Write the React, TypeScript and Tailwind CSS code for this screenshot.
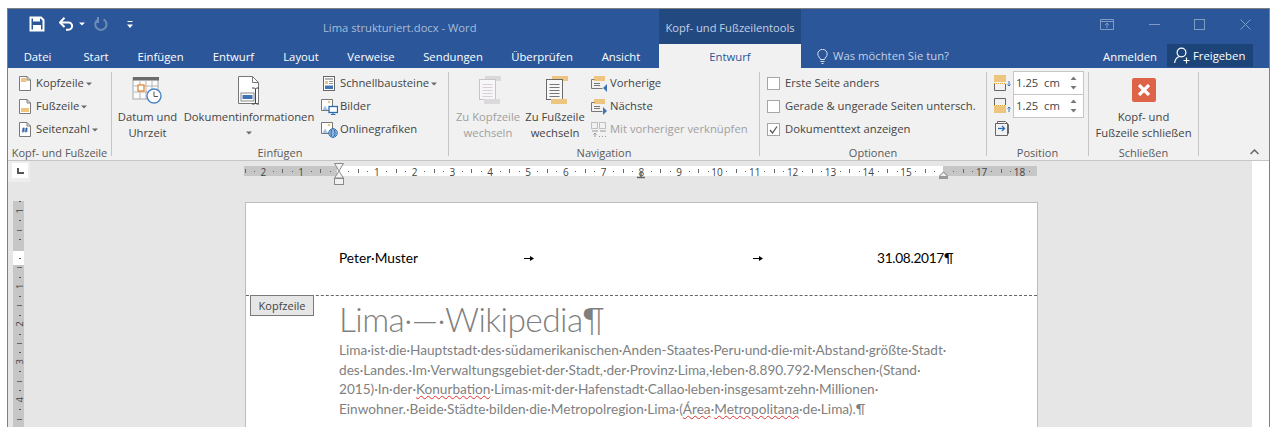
import type { ReactNode } from "react"

const uiFont = "font-['Open_Sans',sans-serif]"
const docFont = "font-['Lato',sans-serif]"

const tabs = [
  { label: "Datei", cls: "w-[59px]" },
  { label: "Start", cls: "w-[58px]" },
  { label: "Einfügen", cls: "w-[71px]" },
  { label: "Entwurf", cls: "w-[75px]" },
  { label: "Layout", cls: "w-[60px]" },
  { label: "Verweise", cls: "w-[80px]" },
  { label: "Sendungen", cls: "w-[84px]" },
  { label: "Überprüfen", cls: "w-[94px]" },
  { label: "Ansicht", cls: "w-[64px]" },
]

function Caret({ className = "fill-[#6a6a6a]" }: { className?: string }) {
  return (
    <svg width="6" height="4" viewBox="0 0 6 4" className={`inline-block shrink-0 ${className}`}>
      <path d="M0 0.5h6L3 3.5z" />
    </svg>
  )
}

function QuickAccess() {
  return (
    <div className="flex items-center h-full">
      <svg width="16" height="16" viewBox="0 0 16 16" className="ml-[21px] mb-[6px]">
        <path d="M1.5 1.5h10.5l2.5 2.5v10.5h-13z" fill="none" stroke="#fff" strokeWidth="2" />
        <rect x="4" y="1" width="7" height="4.5" fill="#fff" />
        <rect x="4" y="9" width="8" height="5" fill="#fff" />
      </svg>
      <svg width="15" height="14" viewBox="0 0 15 14" className="ml-[14px] mb-[6px]">
        <path d="M1 5.5h8.5a3.6 3.6 0 0 1 0 7.2H7" fill="none" stroke="#fff" strokeWidth="2" />
        <path d="M5.5 0.8L1 5.5l4.5 4.5" fill="none" stroke="#fff" strokeWidth="2" />
      </svg>
      <Caret className="fill-white ml-[5px] mb-[6px]" />
      <svg width="14" height="14" viewBox="0 0 14 14" className="ml-[9px] mb-[6px]">
        <path d="M4.2 2.4a5.6 5.6 0 1 0 5.4 0" fill="none" stroke="#6f8cb8" strokeWidth="2" />
        <path d="M4 0v5h-3" fill="none" stroke="#6f8cb8" strokeWidth="2" />
      </svg>
      <svg width="6" height="8" viewBox="0 0 6 8" className="ml-[19px] mb-[4px]">
        <path d="M0.5 0.5h5" stroke="#fff" />
        <path d="M0 3.5h6L3 7z" fill="#fff" />
      </svg>
    </div>
  )
}

function WindowControls() {
  return (
    <div className="flex items-center ml-auto mb-[5px] mr-[18px] gap-[35px]">
      <svg width="14" height="11" viewBox="0 0 14 11" fill="none" stroke="#7f9cc6">
        <path d="M0.5 0.5h13v10h-13zM0.5 2.5h13M7 9V4.5M5 6l2-2 2 2" />
      </svg>
      <svg width="11" height="1" viewBox="0 0 11 1" className="-mr-[1px]">
        <rect width="11" height="1" fill="#7f9cc6" />
      </svg>
      <svg width="11" height="11" viewBox="0 0 11 11" fill="none" stroke="#7f9cc6">
        <rect x="0.5" y="0.5" width="10" height="10" />
      </svg>
      <svg width="11" height="11" viewBox="0 0 11 11" fill="none" stroke="#7f9cc6">
        <path d="M0.5 0.5l10 10M10.5 0.5l-10 10" />
      </svg>
    </div>
  )
}

function TitleBar() {
  return (
    <div className="flex h-[35px] bg-[#2b579a]">
      <div className="w-[315px] shrink-0">
        <QuickAccess />
      </div>
      <div className="w-[336px] shrink-0 pt-[11px] text-[11.2px] leading-[16px] text-[#a9bcd8] whitespace-nowrap">
        Lima strukturiert.docx - Word
      </div>
      <div className="w-[142px] shrink-0 bg-[#234a80] pt-[11px] text-center text-[11.15px] leading-[16px] text-[#c3d0e4] whitespace-nowrap">
        Kopf- und Fußzeilentools
      </div>
      <WindowControls />
    </div>
  )
}

function TabBar() {
  return (
    <div className="flex h-[24px] bg-[#2b579a] text-[11.3px] leading-[26px] text-white">
      <div className="flex w-[651px] shrink-0">
        {tabs.map((t) => (
          <div key={t.label} className={`${t.cls} shrink-0 text-center whitespace-nowrap`}>
            {t.label}
          </div>
        ))}
      </div>
      <div className="w-[142px] shrink-0 bg-[#f1f1f1] text-center text-[#2b579a]">Entwurf</div>
      <div className="flex items-center pl-[16px] text-[#c3d0e4] whitespace-nowrap">
        <svg width="11" height="15" viewBox="0 0 11 15" fill="none" stroke="#d5dfee" className="mr-[5px]">
          <path d="M3.5 10.5C3 8.5 0.8 7.5 0.8 5a4.7 4.7 0 0 1 9.4 0c0 2.5-2.2 3.500-2.7 5.5zM3.5 12.5h4M4.5 14.5h2" />
        </svg>
        Was möchten Sie tun?
      </div>
      <div className="ml-auto flex mr-[16px]">
        <div className="mr-[10px] whitespace-nowrap">Anmelden</div>
        <div className="flex items-center w-[86px] h-[23px] bg-[#1d4478] pl-[7px] whitespace-nowrap">
          <svg width="16" height="17" viewBox="0 0 16 17" fill="none" stroke="#fff" strokeWidth="1.2" className="mr-[3px]">
            <circle cx="7.5" cy="5.5" r="4.4" />
            <path d="M0.6 16c0.5-3.800 2.500-6 5-6.500M9.500 13.500h6M12.500 10.500v6" />
          </svg>
          Freigeben
        </div>
      </div>
    </div>
  )
}

function Group({ label, className, children }: { label: string; className: string; children: ReactNode }) {
  return (
    <div className={`flex flex-col shrink-0 h-[84px] mt-[4px] border-r border-[#c6c6c6] ${className}`}>
      <div className="flex h-[72px]">{children}</div>
      <div className="h-[12px] text-center text-[11px] leading-[17px] text-[#5a5a5a] whitespace-nowrap">{label}</div>
    </div>
  )
}

function SmallRow({ icon, iconCls, children, dim }: { icon: ReactNode; iconCls: string; children: ReactNode; dim?: boolean }) {
  return (
    <div className={`flex items-center h-[23px] whitespace-nowrap ${dim ? "text-[#a0a0a0]" : "text-[#444]"}`}>
      <div className={`flex items-center shrink-0 ${iconCls}`}>{icon}</div>
      {children}
    </div>
  )
}

function LargeButton({ icon, className, children, dim }: { icon: ReactNode; className: string; children: ReactNode; dim?: boolean }) {
  return (
    <div className={`flex flex-col items-center shrink-0 ${className} ${dim ? "text-[#a0a0a0]" : "text-[#444]"}`}>
      <div className="flex items-start justify-center h-[37px] pt-[4px]">{icon}</div>
      <div className="text-center leading-[16px] whitespace-nowrap">{children}</div>
    </div>
  )
}

function PageIcon({ band }: { band: "top" | "bottom" | "num" }) {
  return (
    <svg width="12" height="15" viewBox="0 0 12 15">
      <path d="M0.5 0.5h7.5l3.5 3.5v10.5h-11z" fill="#fff" stroke="#7a7a7a" />
      <path d="M8 0.5v3.5h3.5" fill="none" stroke="#7a7a7a" />
      {band === "top" && <rect x="2" y="2" width="5.5" height="4" fill="#edc57f" />}
      {band === "bottom" && <rect x="2" y="9" width="8" height="4" fill="#edc57f" />}
      {band === "num" && <path d="M4.8 5.5l-1 5M7.8 5.5l-1 5M3 7h5.8M2.8 9h5.8" stroke="#2b579a" fill="none" />}
    </svg>
  )
}

function CalendarIcon() {
  return (
    <svg width="31" height="28" viewBox="0 0 31 28">
      <rect x="1" y="2" width="25" height="21" fill="#fbfbfb" stroke="#a9a9a9" />
      <rect x="1" y="1" width="26" height="3.5" fill="#6b6b6b" />
      <path d="M1.5 10h25M1.5 16h25M8 4v19M14 4v19M20 4v19" stroke="#b5b5b5" />
      <rect x="6" y="9" width="6" height="6" fill="#fff" stroke="#e2883a" strokeWidth="1.3" />
      <circle cx="22" cy="20" r="7" fill="#fff" stroke="#4b84c4" strokeWidth="1.4" />
      <path d="M22 15.5V20.5H26" fill="none" stroke="#555" />
    </svg>
  )
}

function DocInfoIcon() {
  return (
    <svg width="23" height="29" viewBox="0 0 23 29" className="ml-[1px]">
      <path d="M0.5 0.5h14l6 6v21h-20z" fill="#fff" stroke="#777" />
      <path d="M14.5 0.5v6h6" fill="none" stroke="#777" />
      <rect x="3" y="17" width="13" height="8" fill="#fff" stroke="#8a8a8a" />
      <rect x="4.5" y="19" width="10" height="4" fill="#3f74b4" />
      <path d="M14 12h2.5l1 1 1-1H21M17.5 13v14M14 28h2.5l1-1 1 1H21" fill="none" stroke="#444" />
    </svg>
  )
}

function QuickPartsIcon() {
  return (
    <svg width="12" height="15" viewBox="0 0 12 15">
      <rect x="0.5" y="0.5" width="11" height="14" fill="#fff" stroke="#666" />
      <rect x="2" y="2" width="8" height="2" fill="#b6b6b6" />
      <rect x="2" y="5" width="3" height="3" fill="#edc57f" />
      <path d="M6 5.5h4M6 7.5h4" stroke="#999" />
      <rect x="2" y="9.5" width="8" height="3.5" fill="#3f74b4" />
    </svg>
  )
}

function PictureIcon({ badge }: { badge: "screen" | "globe" }) {
  return (
    <svg width="17" height="17" viewBox="0 0 17 17">
      <path d="M0.5 1.5h11v11h-11z" fill="#fff" stroke="#777" />
      <circle cx="8" cy="4" r="1.3" fill="#edc57f" />
      <path d="M1.5 12L4 7.5l3 4.500z" fill="#a8c4e2" />
      {badge === "screen" && (
        <g>
          <rect x="8" y="8.500" width="8.500" height="6" fill="#fff" stroke="#2b6cb0" strokeWidth="1.300" />
          <path d="M12 14.500v1.500M10 16.500h4.500" stroke="#2b6cb0" />
        </g>
      )}
      {badge === "globe" && (
        <g fill="none" stroke="#2b6cb0">
          <circle cx="12" cy="12" r="4.300" fill="#fff" />
          <path d="M8 12h8M8.500 10h7M8.500 14h7" />
          <ellipse cx="12" cy="12" rx="2" ry="4.300" />
        </g>
      )}
    </svg>
  )
}

function StackIcon({ dim }: { dim?: boolean }) {
  const line = dim ? "#d8cfd8" : "#777"
  const frame = dim ? "#c8c4c8" : "#6a6a6a"
  const band = dim ? "#dcd9dc" : "#edc57f"
  return (
    <svg width="22" height="28" viewBox="0 0 22 28" className="ml-[3px]">
      <rect x="6" y="0" width="16" height="5" fill={band} />
      <rect x="0.500" y="3.500" width="16" height="20" fill="#f7f7f7" stroke={frame} />
      <path d="M3.500 8.500h10M3.500 11.500h10M3.500 14.500h10M3.500 17.500h10M3.500 20.500h10" stroke={line} />
      <rect x="5" y="23" width="16" height="5" fill={band} />
    </svg>
  )
}

function NavIcon({ dir }: { dir: "prev" | "next" }) {
  return (
    <svg width="16" height="16" viewBox="0 0 16 16">
      <rect x="3" y="0" width="11" height="5" fill="#edc57f" />
      <path d="M0.500 3.500v9h11" fill="none" stroke="#777" />
      <path d="M0.500 3.500h3M3 7.500h6M3 9.500h6" stroke="#777" fill="none" />
      {dir === "prev" ? <path d="M16 8v8l-4-4z" fill="#3f74b4" /> : <path d="M12 8v8l4-4z" fill="#3f74b4" />}
    </svg>
  )
}

function LinkIcon() {
  return (
    <svg width="16" height="15" viewBox="0 0 16 15" fill="none" stroke="#c0c0c0">
      <rect x="0.500" y="0.500" width="6" height="6" />
      <rect x="8.500" y="0.500" width="6" height="6" />
      <path d="M1 9h6M9 9h6M4 15v-4M2.500 12.500L4 11l1.500 1.500" stroke="#999" />
      <path d="M8 14.500h1M11 14.500h1M14 14.500h1" stroke="#999" />
    </svg>
  )
}

function Checkbox({ checked }: { checked?: boolean }) {
  return (
    <div className="flex items-center justify-center w-[13px] h-[13px] bg-white border border-[#a6a6a6]">
      {checked && (
        <svg width="9" height="8" viewBox="0 0 9 8" fill="none" stroke="#555" strokeWidth="1.300">
          <path d="M1 4l2.500 3L8 0.500" />
        </svg>
      )}
    </div>
  )
}

function Spinner() {
  return (
    <div className="flex items-center w-[71px] h-[24px] -mb-[1px] bg-white border border-[#c6c6c6] pl-[2px] pr-[6px] text-[#444]">
      <span className="whitespace-pre">1.25  cm</span>
      <svg width="7" height="14" viewBox="0 0 7 14" className="ml-auto">
        <path d="M0.500 4L3.500 0.500 6.500 4z" fill="#777" />
        <path d="M0.500 10L3.500 13.500 6.500 10z" fill="#777" />
      </svg>
    </div>
  )
}

function HeaderDistIcon({ flip }: { flip?: boolean }) {
  return (
    <svg width="17" height="16" viewBox="0 0 17 16">
      {flip ? (
        <g>
          <path d="M0.500 7V0.500h11V7" fill="none" stroke="#666" />
          <rect x="0" y="8" width="12" height="7" fill="#edc57f" />
          <path d="M0 7.500h12" stroke="#e0a030" strokeDasharray="1 1" />
          <path d="M15 14V9M13.500 10.500L15 9l1.500 1.500" stroke="#3f74b4" fill="none" />
        </g>
      ) : (
        <g>
          <rect x="0" y="0" width="12" height="7" fill="#edc57f" />
          <path d="M0 8.500h12" stroke="#e0a030" strokeDasharray="1 1" />
          <path d="M0.500 9v6.500h11V9" fill="none" stroke="#666" />
          <path d="M15 6v5M13.500 9.500L15 11l1.500-1.500" stroke="#3f74b4" fill="none" />
        </g>
      )}
    </svg>
  )
}

function AlignIcon() {
  return (
    <svg width="14" height="15" viewBox="0 0 14 15" fill="none" stroke="#666">
      <path d="M0.500 2.500h9l3 0v12h-12zM2.500 2.500v-2h8l3 3v9h-1" />
      <path d="M3 7.500h6" stroke="#2b6cb0" strokeWidth="1.300" />
      <path d="M7 5l2.500 2.500L7 10" stroke="#2b6cb0" strokeWidth="1.300" />
    </svg>
  )
}

function Ribbon() {
  return (
    <div className="relative flex h-[93px] bg-[#f1f1f1] border-b border-[#c6c6c6] text-[11.25px]">
      <Group label="Kopf- und Fußzeile" className="w-[104px]">
        <div className="pl-[11px]">
          <SmallRow icon={<PageIcon band="top" />} iconCls="w-[17px]">
            Kopfzeile <Caret className="fill-[#6a6a6a] ml-[2px]" />
          </SmallRow>
          <SmallRow icon={<PageIcon band="bottom" />} iconCls="w-[17px]">
            Fußzeile <Caret className="fill-[#6a6a6a] ml-[2px]" />
          </SmallRow>
          <SmallRow icon={<PageIcon band="num" />} iconCls="w-[17px]">
            Seitenzahl <Caret className="fill-[#6a6a6a] ml-[2px]" />
          </SmallRow>
        </div>
      </Group>
      <Group label="Einfügen" className="w-[337px]">
        <LargeButton icon={<CalendarIcon />} className="w-[71px]">
          Datum und
          <br />
          Uhrzeit
        </LargeButton>
        <LargeButton icon={<DocInfoIcon />} className="w-[132px]">
          Dokumentinformationen
          <br />
          <Caret className="fill-[#6a6a6a] mb-[2px]" />
        </LargeButton>
        <div className="pl-[6px]">
          <SmallRow icon={<QuickPartsIcon />} iconCls="w-[19px] pl-[2px]">
            Schnellbausteine <Caret className="fill-[#6a6a6a] ml-[2px]" />
          </SmallRow>
          <SmallRow icon={<PictureIcon badge="screen" />} iconCls="w-[19px]">
            Bilder
          </SmallRow>
          <SmallRow icon={<PictureIcon badge="globe" />} iconCls="w-[19px]">
            Onlinegrafiken
          </SmallRow>
        </div>
      </Group>
      <Group label="Navigation" className="w-[311px]">
        <LargeButton icon={<StackIcon dim />} className="w-[72px] ml-[3px]" dim>
          Zu Kopfzeile
          <br />
          wechseln
        </LargeButton>
        <LargeButton icon={<StackIcon />} className="w-[62px]">
          Zu Fußzeile
          <br />
          wechseln
        </LargeButton>
        <div className="pl-[5px]">
          <SmallRow icon={<NavIcon dir="prev" />} iconCls="w-[19px]">
            Vorherige
          </SmallRow>
          <SmallRow icon={<NavIcon dir="next" />} iconCls="w-[19px]">
            Nächste
          </SmallRow>
          <SmallRow icon={<LinkIcon />} iconCls="w-[19px]" dim>
            Mit vorheriger verknüpfen
          </SmallRow>
        </div>
      </Group>
      <Group label="Optionen" className="w-[227px]">
        <div className="pl-[7px]">
          <SmallRow icon={<Checkbox />} iconCls="w-[18px]">
            Erste Seite anders
          </SmallRow>
          <SmallRow icon={<Checkbox />} iconCls="w-[18px]">
            Gerade &amp; ungerade Seiten untersch.
          </SmallRow>
          <SmallRow icon={<Checkbox checked />} iconCls="w-[18px]">
            Dokumenttext anzeigen
          </SmallRow>
        </div>
      </Group>
      <Group label="Position" className="w-[102px]">
        <div className="pl-[7px] -mt-[1px]">
          <div className="flex items-center">
            <div className="w-[19px]">
              <HeaderDistIcon />
            </div>
            <Spinner />
          </div>
          <div className="flex items-center">
            <div className="w-[19px]">
              <HeaderDistIcon flip />
            </div>
            <Spinner />
          </div>
          <div className="pt-[4px] pl-[1px]">
            <AlignIcon />
          </div>
        </div>
      </Group>
      <Group label="Schließen" className="w-[110px]">
        <LargeButton
          className="w-[109px]"
          icon={
            <div className="flex items-center justify-center w-[24px] h-[24px] mt-[2px] rounded-[2px] bg-[#de6448]">
              <svg width="14" height="12" viewBox="0 0 14 12" stroke="#fff" strokeWidth="3.200">
                <path d="M2 1l10 10M12 1L2 11" />
              </svg>
            </div>
          }
        >
          Kopf- und
          <br />
          Fußzeile schließen
        </LargeButton>
      </Group>
      <svg width="9" height="6" viewBox="0 0 9 6" className="absolute left-[1242px] top-[81px]" fill="none" stroke="#666" strokeWidth="1.500">
        <path d="M0.500 5L4.500 1l4 4" />
      </svg>
    </div>
  )
}

// Ruler scale: 37.8px per cm, zero sits on the page's left margin
const CM = 37.8

function HorizontalRuler() {
  const zero = 95
  const marks: ReactNode[] = []
  for (let q = -10; q <= 73; q++) {
    const x = zero + (q * CM) / 4
    const cm = q / 4
    if (q % 4 === 0) {
      if (q !== 0 && q !== 64) {
        marks.push(
          <text key={q} x={x} y="14.500" textAnchor="middle" fontSize="10" fill="#444" fontFamily="Open Sans, sans-serif">
            {Math.abs(cm)}
          </text>
        )
      }
    } else if (q % 2 === 0) {
      marks.push(<rect key={q} x={Math.round(x)} y="8" width="1" height="4" fill="#666" />)
    } else {
      marks.push(<rect key={q} x={Math.round(x)} y="10" width="1" height="1" fill="#666" />)
    }
  }
  return (
    <svg width="796" height="26" viewBox="0 0 796 26" className="shrink-0">
      <rect x="0" y="5" width="793" height="10" fill="#c6c6c6" />
      <rect x="93" y="5" width="606" height="10" fill="#fff" />
      {marks}
      <path d="M90.500 2.500h9L95 10zM95 10l4.500 7h-9z" fill="#f1f1f1" stroke="#8a8a8a" />
      <rect x="90.500" y="17.500" width="9" height="6" fill="#f1f1f1" stroke="#8a8a8a" />
      <path d="M393 16.500h8M397 11v5" stroke="#666" strokeWidth="1.500" />
      <path d="M699.500 11l-4 4v2h8v-2z" fill="#f1f1f1" stroke="#777" />
      <rect x="695" y="15" width="9" height="3" fill="#999" />
    </svg>
  )
}

function VerticalRuler() {
  const zero = 47.500
  const marks: ReactNode[] = []
  for (let q = -5; q <= 19; q++) {
    const y = zero + (q * CM) / 4
    if (q === 0) continue
    if (q % 4 === 0) {
      marks.push(
        <text
          key={q}
          x="7"
          y={y}
          transform={`rotate(-90 7 ${y})`}
          textAnchor="middle"
          dominantBaseline="middle"
          fontSize="9.500"
          fill="#444"
          fontFamily="Open Sans, sans-serif"
        >
          {Math.abs(q / 4)}
        </text>
      )
    } else if (q % 2 === 0) {
      marks.push(<rect key={q} x="4" y={Math.round(y)} width="5" height="1" fill="#666" />)
    } else {
      marks.push(<rect key={q} x="6" y={Math.round(y)} width="2" height="1" fill="#555" />)
    }
  }
  return (
    <svg width="11" height="226" viewBox="0 0 11 226" className="ml-[5px] -mt-[1px] shrink-0 overflow-visible">
      <rect width="11" height="226" fill="#c6c6c6" />
      <rect y="50" width="11" height="14" fill="#fff" />
      {marks}
    </svg>
  )
}

function TabArrow() {
  return (
    <svg width="10" height="7" viewBox="0 0 10 7" className="shrink-0">
      <path d="M0 3.500h7" stroke="#000" />
      <path d="M6 1l4 2.500L6 6z" fill="#000" />
    </svg>
  )
}

const squiggle = "underline decoration-wavy decoration-[#e03030] decoration-1 underline-offset-[1px]"

function Page() {
  return (
    <div className={`relative w-[793px] h-[225px] shrink-0 overflow-hidden bg-white border-x border-t border-[#bdbdbd] ${docFont}`}>
      <div className="flex items-center h-[93px] pl-[93px] pt-[18px] border-b border-dashed border-[#666] text-[13.7px] text-black whitespace-nowrap">
        <div className="w-[185px] shrink-0">Peter·Muster</div>
        <TabArrow />
        <div className="w-[219px] shrink-0" />
        <TabArrow />
        <div className="w-[114px] shrink-0" />
        <div className="tracking-[-0.3px]">31.08.2017¶</div>
      </div>
      <div className="absolute left-[4px] top-[92px] w-[64px] h-[21px] bg-[#e6e6e6] border border-[#7a7a7a] text-center text-[11px] leading-[19px] text-[#444] font-['Open_Sans',sans-serif]">
        Kopfzeile
      </div>
      <div className="pl-[93px] text-[#7f7f7f] whitespace-nowrap">
        <div className="h-[45px] text-[33.5px] font-light tracking-[-0.6px] leading-[46px]">Lima·—·Wikipedia¶</div>
        <div className="text-[13.63px] leading-[19.500px]">
          <div>Lima·ist·die·Hauptstadt·des·südamerikanischen·Anden-Staates·Peru·und·die·mit·Abstand·größte·Stadt·</div>
          <div>des·Landes.·Im·Verwaltungsgebiet·der·Stadt,·der·Provinz·Lima,·leben·8.890.792·Menschen·(Stand·</div>
          <div>
            2015)·In·der·<span className={squiggle}>Konurbation</span>·Limas·mit·der·Hafenstadt·Callao·leben·insgesamt·zehn·Millionen·
          </div>
          <div>
            Einwohner.·Beide·Städte·bilden·die·Metropolregion·Lima·(<span className={squiggle}>Área</span>·
            <span className={squiggle}>Metropolitana</span>·de·Lima).¶
          </div>
        </div>
      </div>
    </div>
  )
}

function DocumentArea() {
  return (
    <div className="flex flex-1 min-h-0">
      <div className="w-[1244px] shrink-0 bg-[#e6e6e6]">
        <div className="flex h-[41px]">
          <div className="w-[22px] h-[21px] shrink-0 bg-[#eeeeee] pl-[4px] pt-[2px]">
            <div className="flex items-center justify-center w-[16px] h-[15px] bg-white">
              <svg width="7" height="6" viewBox="0 0 7 6">
                <path d="M0 0h2v4h5v2H0z" fill="#555" />
              </svg>
            </div>
          </div>
          <div className="w-[214px] shrink-0" />
          <HorizontalRuler />
        </div>
        <div className="flex">
          <div className="w-[237px] shrink-0">
            <VerticalRuler />
          </div>
          <Page />
        </div>
      </div>
    </div>
  )
}

export default function App() {
  return (
    <div className={`w-[1279px] h-[427px] overflow-hidden bg-white pl-[7px] pr-[9px] pt-[8px] ${uiFont}`}>
      <div className="flex flex-col h-full bg-white border-x border-t border-[#808080]">
        <TitleBar />
        <TabBar />
        <Ribbon />
        <DocumentArea />
      </div>
    </div>
  )
}
